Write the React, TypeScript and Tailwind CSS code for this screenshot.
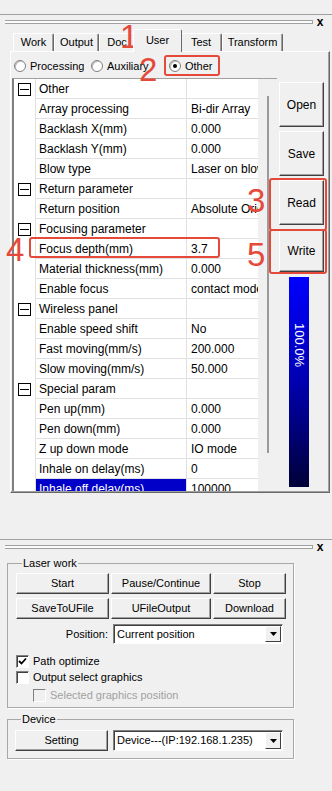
import type { ReactNode } from 'react';

type Row = { name: string; value?: string; group?: boolean; selected?: boolean };

const ROWS: Row[] = [
  { name: 'Other', group: true },
  { name: 'Array processing', value: 'Bi-dir Array' },
  { name: 'Backlash X(mm)', value: '0.000' },
  { name: 'Backlash Y(mm)', value: '0.000' },
  { name: 'Blow type', value: 'Laser on blow' },
  { name: 'Return parameter', group: true },
  { name: 'Return position', value: 'Absolute Origin' },
  { name: 'Focusing parameter', group: true },
  { name: 'Focus depth(mm)', value: '3.7' },
  { name: 'Material thickness(mm)', value: '0.000' },
  { name: 'Enable focus', value: 'contact mode' },
  { name: 'Wireless panel', group: true },
  { name: 'Enable speed shift', value: 'No' },
  { name: 'Fast moving(mm/s)', value: '200.000' },
  { name: 'Slow moving(mm/s)', value: '50.000' },
  { name: 'Special param', group: true },
  { name: 'Pen up(mm)', value: '0.000' },
  { name: 'Pen down(mm)', value: '0.000' },
  { name: 'Z up down mode', value: 'IO mode' },
  { name: 'Inhale on delay(ms)', value: '0' },
  { name: 'Inhale off delay(ms)', value: '100000', selected: true },
];

const TABS = [
  { label: 'Work', w: 'w-[41px]' },
  { label: 'Output', w: 'w-[45px]' },
  { label: 'Doc', w: 'w-[36px]' },
  { label: 'User', w: 'w-[49px]', active: true },
  { label: 'Test', w: 'w-[42px]' },
  { label: 'Transform', w: 'w-[61px]' },
];

function Gripper() {
  return (
    <div className="flex items-center h-[13px] pl-[5px] pr-[5px]">
      <div className="flex-1 h-[4px] border-y border-r border-[#a0a0a0] bg-[#fbfbfb]" />
      <span className="w-[14px] text-center text-[12px] font-bold leading-none">x</span>
    </div>
  );
}

function Btn({ children, className = '' }: { children: ReactNode; className?: string }) {
  return (
    <div
      className={
        'flex items-center justify-center bg-[#f0f0f0] border border-t-white border-l-white border-r-[#404040] border-b-[#404040] shadow-[inset_-1px_-1px_0_#a0a0a0] text-[11px] leading-none whitespace-nowrap ' +
        className
      }
    >
      {children}
    </div>
  );
}

function Select({ text, className = '' }: { text: string; className?: string }) {
  return (
    <div
      className={
        'flex items-stretch bg-white border border-t-[#808080] border-l-[#808080] border-r-white border-b-white shadow-[inset_1px_1px_0_#404040] ' +
        className
      }
    >
      <div className="flex-1 flex items-center pl-[3px] text-[11px] whitespace-nowrap overflow-hidden">{text}</div>
      <div className="w-[16px] m-[1px] flex items-center justify-center bg-[#f0f0f0] border border-t-white border-l-white border-r-[#404040] border-b-[#404040]">
        <svg width="7" height="4" viewBox="0 0 7 4">
          <path d="M0 0h7L3.5 4z" fill="#000" />
        </svg>
      </div>
    </div>
  );
}

function Check({ checked, disabled, label }: { checked?: boolean; disabled?: boolean; label: string }) {
  return (
    <div className={'flex items-center h-[13px] gap-[4px] text-[11px] ' + (disabled ? 'text-[#a0a0a0]' : '')}>
      <div
        className={
          'w-[13px] h-[13px] border border-t-[#808080] border-l-[#808080] border-r-white border-b-white flex items-center justify-center ' +
          (disabled ? 'bg-[#f0f0f0]' : 'bg-white shadow-[inset_1px_1px_0_#404040]')
        }
      >
        {checked && (
          <svg width="9" height="9" viewBox="0 0 9 9">
            <path d="M1 4l2.5 2.5L8 1.5" stroke="#000" strokeWidth="1.8" fill="none" />
          </svg>
        )}
      </div>
      <span>{label}</span>
    </div>
  );
}

function Radio({ checked, label, className = '' }: { checked?: boolean; label: string; className?: string }) {
  return (
    <div className={'flex items-center gap-[4px] text-[11px] ' + className}>
      <div className="w-[12px] h-[12px] shrink-0 rounded-full bg-white border border-[#808080] shadow-[inset_1px_1px_0_#c0c0c0] flex items-center justify-center">
        {checked && <div className="w-[4px] h-[4px] rounded-full bg-black" />}
      </div>
      <span className="min-w-0 whitespace-nowrap overflow-hidden">{label}</span>
    </div>
  );
}

function Minus() {
  return (
    <div className="w-[13px] h-[13px] border border-black bg-white flex items-center justify-center">
      <div className="w-[9px] h-px bg-black" />
    </div>
  );
}

function Digit({ n, className }: { n: string; className: string }) {
  return <div className={'absolute text-[33px] leading-none text-[#e5493a] ' + className}>{n}</div>;
}

export default function App() {
  return (
    <div className="relative w-[332px] h-[791px] overflow-hidden bg-[#f0f0f0] text-black font-['Liberation_Sans',Arial,sans-serif]">
      {/* top dock */}
      <div className="h-[14px]" />
      <div className="h-px bg-[#a0a0a0]" />
      <Gripper />

      {/* tabs */}
      <div className="flex items-end h-[23px] pl-[13px] text-[11px]">
        {TABS.map((t) =>
          t.active ? (
            <div
              key={t.label}
              className={`${t.w} -mx-[2px] h-[23px] -mb-px z-10 relative flex items-center justify-center bg-[#f0f0f0] border-t border-l border-white border-r border-r-[#696969] rounded-t-[2px] pb-[2px]`}
            >
              {t.label}
            </div>
          ) : (
            <div
              key={t.label}
              className={`${t.w} h-[18px] flex items-center justify-center bg-[#f0f0f0] border-t border-l border-white border-r border-r-[#696969] rounded-t-[2px] shadow-[inset_-1px_0_0_#a0a0a0]`}
            >
              {t.label}
            </div>
          ),
        )}
      </div>

      {/* tab panel */}
      <div className="ml-[10px] mr-[2px] h-[442px] border border-t-white border-l-white border-r-[#696969] border-b-[#696969] shadow-[inset_-1px_-1px_0_#a0a0a0] flex flex-col">
        <div className="h-[26px] flex items-center pl-[3px] pt-[2px]">
          <Radio label="Processing" className="w-[72px] mr-[4px]" />
          <Radio label="Auxiliary" className="w-[78px] ml-[1px]" />
          <Radio label="Other" checked />
        </div>

        <div className="flex flex-1 min-h-0">
          {/* property grid */}
          <div className="ml-[1px] w-[265px] h-[413px] overflow-hidden border-l-2 border-t border-[#808080] border-t-[#a0a0a0] flex bg-white">
            <div className="w-[244px] flex flex-col">
              {ROWS.map((r) => (
                <div key={r.name} className="flex h-[20px] shrink-0 text-[12px]">
                  <div className="w-[21px] flex items-center justify-center">{r.group && <Minus />}</div>
                  <div
                    className={
                      'w-[151px] flex items-center pl-[3px] border-l border-b border-[#e0e0e0] whitespace-nowrap overflow-hidden ' +
                      (r.selected ? 'bg-[#0000c8] text-white' : '')
                    }
                  >
                    {r.name}
                  </div>
                  <div className="w-[72px] flex items-center pl-[4px] border-l border-b border-[#e0e0e0] whitespace-nowrap overflow-hidden">
                    {r.value}
                  </div>
                </div>
              ))}
            </div>
            <div className="flex-1 bg-[#f0f0f0] flex justify-center pt-[17px]">
              <div className="w-[2px] h-[357px] bg-[#9a9a9a]" />
            </div>
          </div>

          {/* right buttons */}
          <div className="ml-[2px] flex flex-col pt-[4px]">
            <Btn className="w-[45px] h-[45px] text-[12px]">Open</Btn>
            <Btn className="w-[45px] h-[45px] mt-[4px] text-[12px]">Save</Btn>
            <Btn className="w-[45px] h-[45px] mt-[4px] text-[12px]">Read</Btn>
            <Btn className="w-[45px] h-[43px] mt-[4px] text-[12px]">Write</Btn>
            <div className="ml-[10px] mt-[5px] w-[20px] h-[210px] bg-[linear-gradient(to_bottom,#0000ff,#0000b0_50%,#000038)] flex justify-center pt-[46px]">
              <span className="[writing-mode:vertical-rl] text-white text-[13px] leading-none">100.0%</span>
            </div>
          </div>
        </div>
      </div>

      {/* bottom dock */}
      <div className="h-[46px]" />
      <div className="h-px bg-[#a0a0a0]" />
      <Gripper />

      <fieldset className="ml-[7px] w-[287px] mt-[4px] border border-[#a8a8a8] shadow-[1px_1px_0_#fff] pl-[8px] pb-[5px]">
        <legend className="ml-[6px] px-[1px] text-[11px] leading-[13px]">Laser work</legend>
        <div className="flex gap-[2px] mt-[3px]">
          <Btn className="w-[93px] h-[21px]">Start</Btn>
          <Btn className="w-[100px] h-[21px]">Pause/Continue</Btn>
          <Btn className="w-[73px] h-[21px]">Stop</Btn>
        </div>
        <div className="flex gap-[2px] mt-[4px]">
          <Btn className="w-[93px] h-[21px]">SaveToUFile</Btn>
          <Btn className="w-[100px] h-[21px]">UFileOutput</Btn>
          <Btn className="w-[73px] h-[21px]">Download</Btn>
        </div>
        <div className="flex items-center mt-[5px]">
          <div className="w-[92px] text-right text-[11px]">Position:</div>
          <Select text="Current position" className="ml-[5px] w-[170px] h-[20px]" />
        </div>
        <div className="mt-[11px] flex flex-col">
          <Check checked label="Path optimize" />
          <div className="mt-[3px]">
            <Check label="Output select graphics" />
          </div>
          <div className="pl-[17px] mt-[5px]">
            <Check disabled label="Selected graphics position" />
          </div>
        </div>
      </fieldset>

      <fieldset className="ml-[7px] w-[287px] mt-[5px] border border-[#a8a8a8] shadow-[1px_1px_0_#fff] pl-[7px] pb-[7px]">
        <legend className="ml-[6px] px-[1px] text-[11px] leading-[13px]">Device</legend>
        <div className="flex items-center mt-[4px]">
          <Btn className="w-[93px] h-[21px]">Setting</Btn>
          <Select text="Device---(IP:192.168.1.235)" className="ml-[5px] w-[170px] h-[21px]" />
        </div>
      </fieldset>

      {/* annotations */}
      <div className="absolute left-[137px] top-[29px] w-[44px] h-[22px] border-2 border-[#e5493a] rounded-[3px]" />
      <div className="absolute left-[164px] top-[55px] w-[56px] h-[21px] border-2 border-[#e5493a] rounded-[3px]" />
      <div className="absolute left-[269px] top-[178px] w-[58px] h-[53px] border-2 border-[#e5493a] rounded-[3px]" />
      <div className="absolute left-[269px] top-[229px] w-[58px] h-[45px] border-2 border-[#e5493a] rounded-[3px]" />
      <div className="absolute left-[29px] top-[237px] w-[191px] h-[21px] border-2 border-[#e5493a] rounded-[3px]" />
      <Digit n="1" className="left-[120px] top-[20px]" />
      <Digit n="2" className="left-[139px] top-[53px] text-[30px]" />
      <Digit n="3" className="left-[247px] top-[184px]" />
      <Digit n="4" className="left-[6px] top-[233px]" />
      <Digit n="5" className="left-[247px] top-[238px]" />
    </div>
  );
}
